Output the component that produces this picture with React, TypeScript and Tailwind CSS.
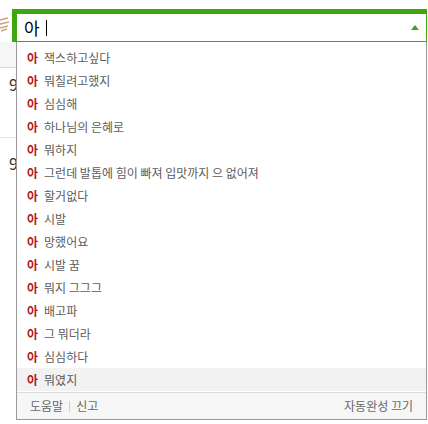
import React from 'react';

const items = [
  '잭스하고싶다',
  '뭐칠려고했지',
  '심심해',
  '하나님의 은혜로',
  '뭐하지',
  '그런데 발톱에 힘이 빠져 입맛까지 으 없어져',
  '할거없다',
  '시발',
  '망했어요',
  '시발 꿈',
  '뭐지 그그그',
  '배고파',
  '그 뭐더라',
  '심심하다',
  '뭐였지',
];

const font = { fontFamily: '"Noto Sans CJK KR", "Noto Sans", sans-serif' };

const App = () => {
  return (
    <div className="relative w-[428px] h-[424px] bg-white overflow-hidden" style={font}>
      {/* page behind the dropdown */}
      <div className="absolute left-0 top-0 w-[16px] h-full">
        <svg className="absolute left-0 top-[17px]" width="10" height="16" viewBox="0 0 10 16">
          <path d="M0 3 L8 1 M0 7 L9 5 M0 11 L8 9 M1 14 L7 12" stroke="#c9a47a" strokeWidth="1.4" fill="none" />
        </svg>
        <div className="mt-[42px] h-[26px] bg-[#f6f6f6] border-b border-[#d8d8d8]" />
        <div className="h-[70px] border-b border-[#e4e4e4] relative">
          <span className="absolute left-[9px] top-[8px] text-[16px] text-[#333] leading-none">9</span>
        </div>
        <div className="relative h-[40px]">
          <span className="absolute left-[9px] top-[17px] text-[16px] text-[#333] leading-none">9</span>
        </div>
      </div>

      {/* search box */}
      <div className="absolute left-[12px] top-[9px] w-[415px] h-[33px] border-[#3ea70f] border-t-[5px] border-l-[5px] border-r border-b bg-white flex items-center pl-[7px] pr-[7px]">
        <span className="text-[17px] text-black leading-none">아</span>
        <span className="ml-[6px] w-px h-[16px] bg-black" />
        <span className="ml-auto w-0 h-0 border-l-[4px] border-r-[4px] border-b-[5px] border-l-transparent border-r-transparent border-b-[#4f9a24]" />
      </div>

      {/* dropdown */}
      <div className="absolute left-[16px] top-[42px] w-[411px] h-[378px] border-l border-r border-b border-[#9a9a9a] bg-white flex flex-col">
        <ul className="pt-[4px]">
          {items.map((t, i) => (
            <li
              key={i}
              className={`h-[23px] flex items-center pl-[10px] text-[12px] leading-none whitespace-nowrap ${
                i === items.length - 1 ? 'bg-[#f2f2f2]' : ''
              }`}
            >
              <span className="font-bold text-[#b5161b]">아</span>
              <span className="ml-[6px] text-[#5c5c5c]">{t}</span>
            </li>
          ))}
        </ul>
        <div className="mt-[1px] flex-1 border-t border-[#dcdcdc] bg-[#f6f6f6] flex items-center px-[13px] text-[12px] text-[#666] leading-none">
          <span>도움말</span>
          <span className="mx-[6px] w-px h-[11px] bg-[#d0d0d0]" />
          <span>신고</span>
          <span className="ml-auto">자동완성 끄기</span>
        </div>
      </div>
    </div>
  );
};

export default App;
